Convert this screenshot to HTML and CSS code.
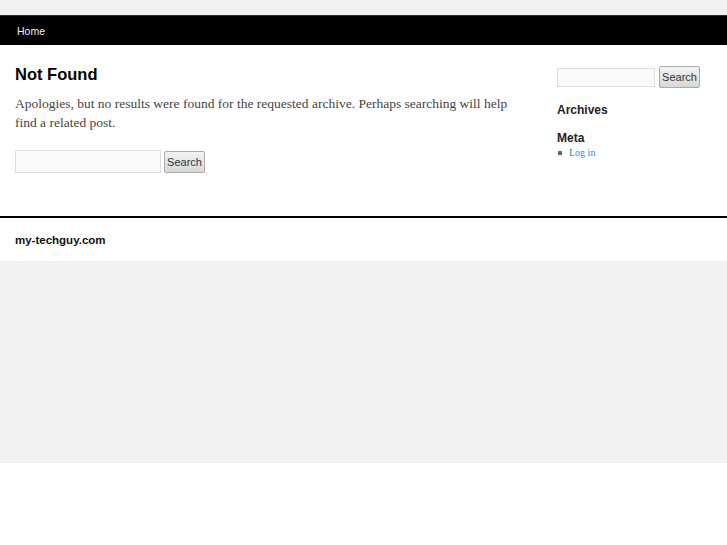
FILE: index.html
```html
<!DOCTYPE html>
<html>
<head>
<meta charset="utf-8">
<link rel="stylesheet" href="styles.css">
</head>
<body>
<div class="page-bg">
  <div class="page">
    <nav class="nav"><a href="#">Home</a></nav>
    <div class="main">
      <div class="content">
        <h1 class="title">Not Found</h1>
        <p class="text">Apologies, but no results were found for the requested archive. Perhaps searching will help find a related post.</p>
        <form class="search search-main">
          <input type="text" class="field">
          <button type="button" class="btn">Search</button>
        </form>
      </div>
      <aside class="sidebar">
        <form class="search search-side">
          <input type="text" class="field">
          <button type="button" class="btn">Search</button>
        </form>
        <h3 class="widget-title">Archives</h3>
        <h3 class="widget-title meta">Meta</h3>
        <ul class="meta-list"><li><a href="#">Log in</a></li></ul>
      </aside>
    </div>
    <footer class="footer">my-techguy.com</footer>
  </div>
</div>
</body>
</html>
```
FILE: styles.css
```css
html, body { margin: 0; padding: 0; background: #fff; }
.page-bg { background: #f1f1f1; height: 463px; padding-top: 15px; box-sizing: border-box; }
.page { background: #fff; }
.nav { background: #000; height: 30px; display: flex; align-items: center; padding-left: 17px; border-top: 1px solid #2a2a2a; box-sizing: border-box; }
.nav a { color: #eee; text-decoration: none; font-family: "Liberation Sans", Arial, sans-serif; font-size: 10.5px; }
.main { display: flex; padding: 0 0 0 15px; height: 171px; border-bottom: 2px solid #000; box-sizing: content-box; }
.content { width: 500px; }
.title { font-family: "Liberation Sans", Arial, sans-serif; font-size: 16.5px; font-weight: bold; color: #000; margin: 19px 0 0; line-height: 20px; }
.text { font-family: "Liberation Serif", "Times New Roman", serif; font-size: 13.5px; line-height: 19px; color: #444; margin: 10px 0 0; }
.search { display: flex; align-items: center; }
.search-main { margin-top: 18px; }
.field { box-sizing: border-box; border: 1px solid #ddd; background: #fafafa; padding: 0; margin: 0; height: 23px; width: 146px; }
.btn { box-sizing: border-box; margin: 0 0 0 3px; height: 22px; width: 41px; padding: 0; font-family: "Liberation Sans", Arial, sans-serif; font-size: 11px; color: #333; border: 1px solid #aaa; border-radius: 2px; background: linear-gradient(#f3f3f3, #d8d8d8); }
.sidebar { margin-left: 42px; width: 150px; }
.search-side { margin-top: 21px; }
.search-side .field { width: 98px; height: 19px; }
.search-side .btn { margin-left: 4px; height: 22px; }
.widget-title { font-family: "Liberation Sans", Arial, sans-serif; font-size: 12px; font-weight: bold; color: #222; margin: 15px 0 0; line-height: 14px; }
.widget-title.meta { margin-top: 14px; }
.meta-list { margin: 2px 0 0; padding: 0; list-style: none; }
.meta-list li { font-family: "Liberation Serif", "Times New Roman", serif; font-size: 10px; line-height: 12px; display: flex; align-items: center; }
.meta-list li::before { content: ""; width: 4px; height: 4px; background: #666; margin: 0 7px 0 1px; }
.meta-list a { color: #1b8be0; text-decoration: none; }
.footer { font-family: "Liberation Sans", Arial, sans-serif; font-size: 11.5px; font-weight: bold; color: #111; padding: 0 15px; height: 43px; line-height: 44px; }
```
